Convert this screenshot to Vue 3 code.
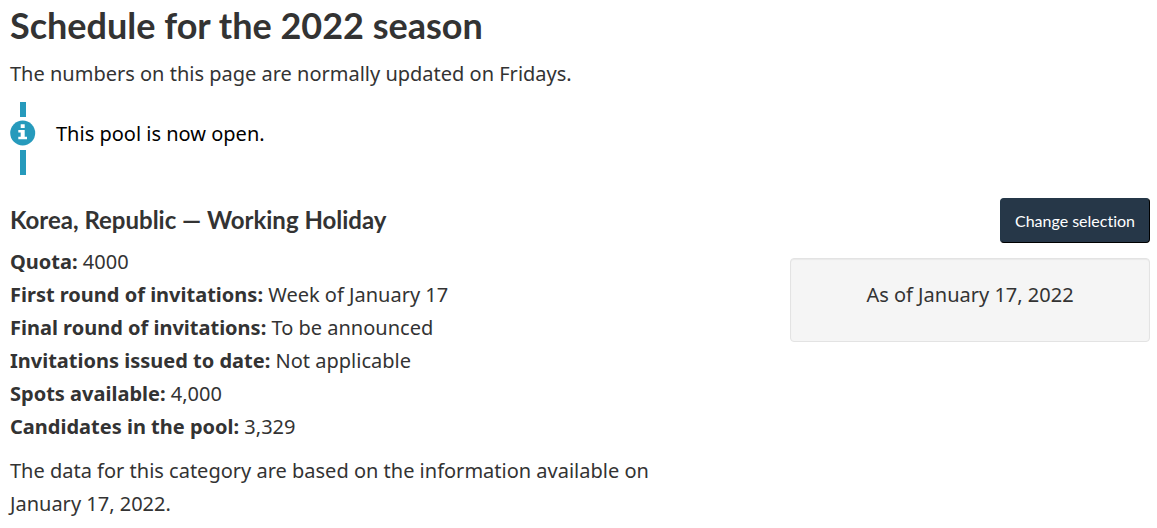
<script setup>
const details = [
  { label: 'Quota', value: '4000' },
  { label: 'First round of invitations', value: 'Week of January 17' },
  { label: 'Final round of invitations', value: 'To be announced' },
  { label: 'Invitations issued to date', value: 'Not applicable' },
  { label: 'Spots available', value: '4,000' },
  { label: 'Candidates in the pool', value: '3,329' },
]
</script>

<template>
  <main class="page">
    <h1>Schedule for the 2022 season</h1>
    <p class="intro">The numbers on this page are normally updated on Fridays.</p>

    <section class="alert">
      <div class="marker">
        <span class="bar"></span>
        <svg viewBox="0 0 26 26" aria-hidden="true">
          <circle cx="12.7" cy="13" r="12.5" fill="#269abc" />
          <path d="M10.7 4.3h4v3.7h-4zM8.3 10h6.4v6.7h2.3v2.6H8.3v-2.6h2.4v-4.1H8.3z" fill="#fff" />
        </svg>
        <span class="bar"></span>
      </div>
      <p>This pool is now open.</p>
    </section>

    <div class="row">
      <section class="category">
        <h2>Korea, Republic — Working Holiday</h2>
        <ul>
          <li v-for="item in details" :key="item.label">
            <strong>{{ item.label }}:</strong> {{ item.value }}
          </li>
        </ul>
        <p>The data for this category are based on the information available on January 17, 2022.</p>
      </section>

      <aside>
        <button type="button">Change selection</button>
        <div class="well">As of January 17, 2022</div>
      </aside>
    </div>
  </main>
</template>

<style>
body { background: #fff; }
</style>

<style scoped>
.page { padding: 5px 7px 0 10px; color: #333; font: 20px/33px "Noto Sans", sans-serif; }
h1, h2 { margin: 0; font-family: Lato, sans-serif; font-weight: 700; }
h1 { font-size: 36px; line-height: 40px; }
p { margin: 0; }
.intro { margin-top: 12px; }
.alert { display: flex; align-items: flex-start; gap: 20px; margin-top: 12px; color: #000; }
.alert p { margin-top: 15px; }
.marker { display: flex; flex-direction: column; align-items: center; gap: 3px; width: 26px; }
.marker svg { display: block; width: 26px; height: 26px; }
.bar { width: 6px; height: 15px; background: #269abc; }
.bar:last-child { height: 25px; margin-top: 1px; }
.row { display: flex; justify-content: space-between; gap: 30px; margin-top: 23px; }
.category { flex: 0 1 660px; }
h2 { margin-top: 8px; font-size: 24px; line-height: 28px; }
ul { margin: 11px 0; padding: 0; list-style: none; }
aside { display: flex; flex: 0 0 360px; flex-direction: column; align-items: flex-end; }
button { padding: 10px 14px; border: 1px solid; border-color: #243748 #000 #000 #243748; border-radius: 4px; background: #263748; color: #fff; font: 16px/23px Lato, sans-serif; font-variant-ligatures: none; cursor: pointer; }
.well { box-sizing: border-box; width: 100%; margin-top: 15px; padding: 19px 19px 30px; border: 1px solid #e3e3e3; border-radius: 4px; background: #f5f5f5; box-shadow: inset 0 1px 1px rgba(0, 0, 0, 0.05); text-align: center; }
</style>
